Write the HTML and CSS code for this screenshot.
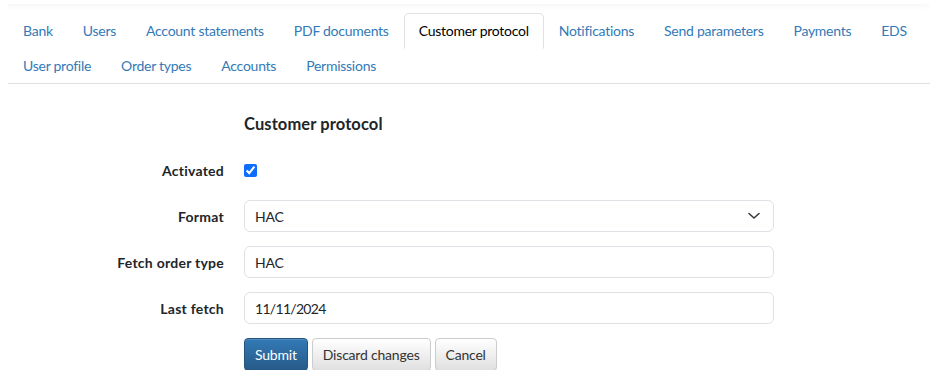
FILE: index.html
```html
<!DOCTYPE html>
<html lang="en">
<head>
<meta charset="utf-8">
<title>Customer protocol</title>
<link rel="stylesheet" href="styles.css">
</head>
<body>
<div class="topbar"></div>
<ul class="tabs">
  <li class="tab"><a href="#">Bank</a></li>
  <li class="tab"><a href="#">Users</a></li>
  <li class="tab"><a href="#">Account statements</a></li>
  <li class="tab"><a href="#">PDF documents</a></li>
  <li class="tab active"><a href="#">Customer protocol</a></li>
  <li class="tab"><a href="#">Notifications</a></li>
  <li class="tab"><a href="#">Send parameters</a></li>
  <li class="tab"><a href="#">Payments</a></li>
  <li class="tab"><a href="#">EDS</a></li>
  <li class="tab"><a href="#">User profile</a></li>
  <li class="tab"><a href="#">Order types</a></li>
  <li class="tab"><a href="#">Accounts</a></li>
  <li class="tab"><a href="#">Permissions</a></li>
</ul>
<form class="form">
  <div class="spacer"></div>
  <h2 class="heading">Customer protocol</h2>

  <label class="label" for="act">Activated</label>
  <div class="field check"><input id="act" type="checkbox" checked></div>

  <label class="label" for="fmt">Format</label>
  <div class="field select-wrap">
    <select id="fmt" class="control select"><option>HAC</option></select>
    <svg class="chevron" width="12" height="8" viewBox="0 0 12 8"><path d="M1 1.5 L6 6 L11 1.5" fill="none" stroke="#343a40" stroke-width="1.6" stroke-linecap="round" stroke-linejoin="round"/></svg>
  </div>

  <label class="label" for="fot">Fetch order type</label>
  <div class="field"><input id="fot" class="control" type="text" value="HAC"></div>

  <label class="label" for="lf">Last fetch</label>
  <div class="field"><input id="lf" class="control date" type="text" value="11/11/2024"></div>

  <div class="spacer"></div>
  <div class="buttons">
    <button type="button" class="btn primary">Submit</button>
    <button type="button" class="btn">Discard changes</button>
    <button type="button" class="btn">Cancel</button>
  </div>
</form>
</body>
</html>
```
FILE: styles.css
```css
* { box-sizing: border-box; }
html, body { background: #fff; }
body {
  margin: 0 8px 8px 8px;
  font-family: "Lato", "Noto Sans", sans-serif;
  font-size: 14px;
  letter-spacing: -0.2px;
  color: #212529;
}
.topbar {
  height: 4px;
  margin: 0 0 0 -8px;
  width: 930px;
  box-shadow: 0 1px 6px rgba(0, 0, 0, 0.06);
  background: #fff;
}
.tabs {
  list-style: none;
  margin: 9px 0 0 0;
  padding: 0;
  display: flex;
  flex-wrap: wrap;
  border-bottom: 1px solid #dee2e6;
}
.tab {
  margin-bottom: -1px;
}
.tab a {
  display: block;
  padding: 7px 14px;
  line-height: 20px;
  letter-spacing: -0.26px;
  border: 1px solid transparent;
  border-top-left-radius: 5px;
  border-top-right-radius: 5px;
  color: #337ab7;
  text-decoration: none;
}
.tab.active a {
  color: #000;
  border-color: #dee2e6 #dee2e6 transparent;
  background: #fff;
}
.form {
  display: grid;
  grid-template-columns: 216px 530px;
  grid-auto-rows: 32px;
  column-gap: 20px;
  row-gap: 14px;
  margin-top: 24px;
}
.heading {
  margin: 0;
  font-size: 16.5px;
  font-weight: 700;
  letter-spacing: 0.1px;
  align-self: center;
  color: #212529;
}
.label {
  font-weight: 700;
  letter-spacing: 0.25px;
  text-align: right;
  align-self: center;
}
.field { align-self: stretch; }
.check { display: flex; align-items: center; }
.check input { width: 13px; height: 13px; margin: 0; accent-color: #0d6efd; }
.control {
  width: 100%;
  height: 32px;
  border: 1px solid #dee2e6;
  border-radius: 6px;
  padding: 0 10px;
  font: inherit;
  letter-spacing: -0.2px;
  color: #212529;
  background: #fff;
}
.control.date { letter-spacing: -0.7px; }
.select-wrap { position: relative; }
.select { appearance: none; -webkit-appearance: none; }
.chevron { position: absolute; right: 14px; top: 12px; pointer-events: none; }
.buttons { display: flex; gap: 4px; height: 33px; }
.btn {
  font: inherit;
  letter-spacing: -0.2px;
  color: #333;
  padding: 0 10px;
  border: 1px solid #ccc;
  border-radius: 4px;
  background: linear-gradient(#fff, #e0e0e0);
  box-shadow: inset 0 1px 0 rgba(255,255,255,.15), 0 1px 1px rgba(0,0,0,.075);
}
.btn.primary {
  color: #fff;
  border-color: #245580;
  background: linear-gradient(#337ab7, #265a88);
}
```
